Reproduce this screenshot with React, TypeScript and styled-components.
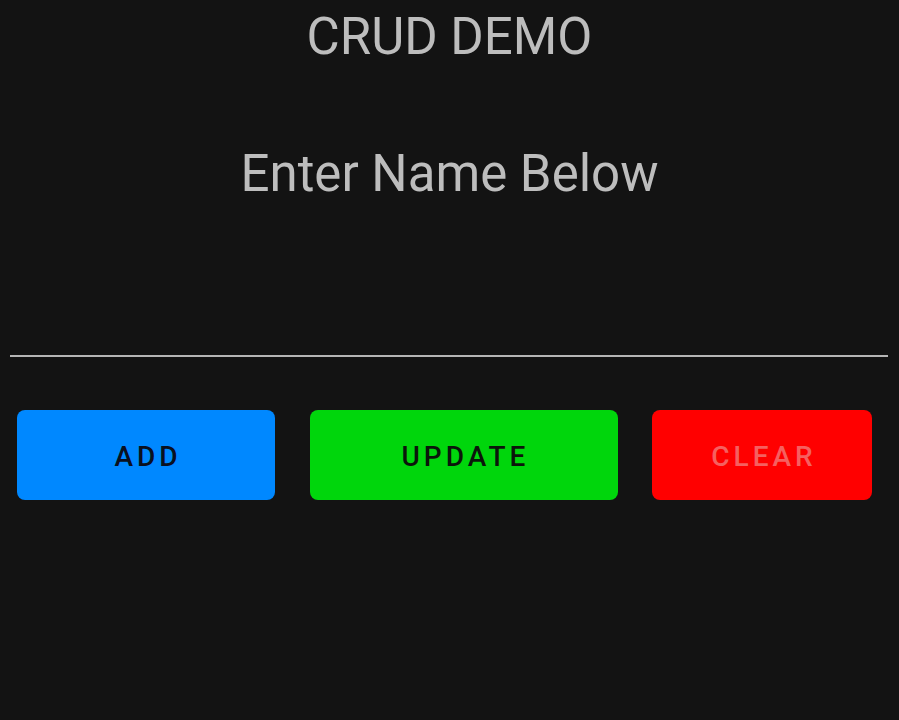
import React from "react";
import styled, { createGlobalStyle } from "styled-components";

const Global = createGlobalStyle`
  html, body { margin: 0; padding: 0; background: #131313; }
  body { font-family: Roboto, "Noto Sans", sans-serif; }
`;

const Page = styled.div`
  width: 899px;
  height: 720px;
  background: #131313;
  display: flex;
  flex-direction: column;
  align-items: center;
`;

const Title = styled.h1`
  margin: 0;
  padding-top: 10px;
  height: 60px;
  font-family: Roboto, sans-serif;
  font-weight: 400;
  font-size: 51px;
  line-height: 54px;
  color: #bdbdbd;
`;

const Prompt = styled.h2`
  margin: 0;
  margin-top: 74px;
  font-family: Roboto, sans-serif;
  font-weight: 400;
  font-size: 51px;
  line-height: 60px;
  color: #bdbdbd;
`;

const Field = styled.input`
  box-sizing: border-box;
  width: 878px;
  align-self: flex-start;
  margin-left: 10px;
  margin-top: 93px;
  height: 60px;
  background: transparent;
  border: none;
  border-bottom: 2px solid #b5b5b5;
  outline: none;
  color: #e0e0e0;
  font-family: Roboto, sans-serif;
  font-size: 30px;
`;

const Row = styled.div`
  align-self: flex-start;
  display: flex;
  gap: 34.5px;
  margin-left: 17px;
  margin-top: 53px;
`;

const Button = styled.button<{ $bg: string; $fg: string; $w: number }>`
  width: ${(p) => p.$w}px;
  height: 90px;
  border: none;
  border-radius: 8px;
  background: ${(p) => p.$bg};
  color: ${(p) => p.$fg};
  font-family: Roboto, sans-serif;
  font-weight: 500;
  font-size: 28px;
  letter-spacing: 4px;
  padding: 2px 0 0 4px;
  cursor: pointer;
`;

export default function App() {
  return (
    <Page>
      <Global />
      <Title>CRUD DEMO</Title>
      <Prompt>Enter Name Below</Prompt>
      <Field />
      <Row>
        <Button $bg="#0088ff" $fg="#0a1020" $w={258}>ADD</Button>
        <Button $bg="#00d60c" $fg="#0b160b" $w={308}>UPDATE</Button>
        <Button $bg="#ff0000" $fg="#f56060" $w={220}>CLEAR</Button>
      </Row>
    </Page>
  );
}
